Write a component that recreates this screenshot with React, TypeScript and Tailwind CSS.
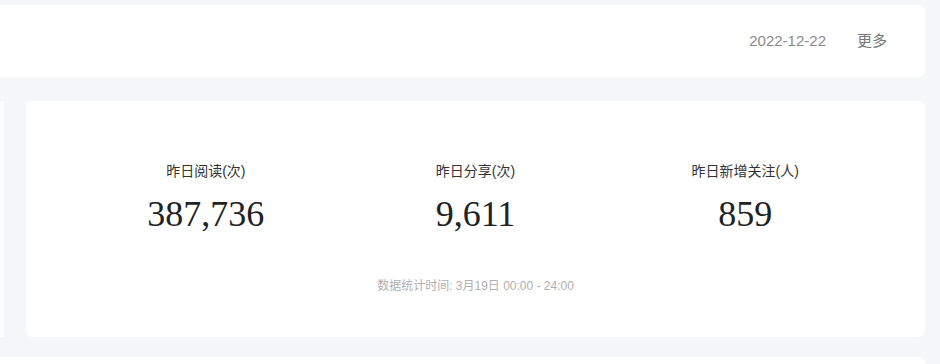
import React from 'react';

const stats = [
  { label: '昨日阅读(次)', value: '387,736' },
  { label: '昨日分享(次)', value: '9,611' },
  { label: '昨日新增关注(人)', value: '859' },
];

export default function App() {
  return (
    <div
      className="w-[940px] h-[364px] overflow-hidden bg-[#f5f6f8] pt-[5px] pr-[15px]"
      style={{ fontFamily: '"Liberation Sans", "Noto Sans CJK SC", sans-serif' }}
    >
      {/* 顶部栏 */}
      <div className="h-[72px] bg-white rounded-r-[6px] flex items-center justify-end pr-[38px]">
        <span className="text-[15px] leading-[20px] text-[#8a8a8a]">2022-12-22</span>
        <span className="ml-[31px] text-[15px] leading-[20px] text-[#777]">更多</span>
      </div>

      {/* 数据概览 */}
      <div className="flex mt-[24px] h-[236px]">
        <div className="w-[4px] bg-[#fcfdfe]" />
        <div className="flex-1 ml-[22px] bg-white rounded-[6px] pt-[60px] px-[45px]">
          <div className="grid grid-cols-3">
            {stats.map(s => (
              <div key={s.label} className="flex flex-col items-center">
                <p className="text-[14px] leading-[20px] text-[#333]">{s.label}</p>
                <p
                  className="mt-[13px] text-[36px] leading-[40px] text-[#222]"
                  style={{ fontFamily: '"Liberation Serif", serif' }}
                >
                  {s.value}
                </p>
              </div>
            ))}
          </div>
          <p className="mt-[44px] text-center text-[12px] leading-[16px] text-[#b0b0b0]">
            数据统计时间: 3月19日 00:00 - 24:00
          </p>
        </div>
      </div>

      <div className="mt-[20px] h-[40px] bg-white rounded-r-[6px]" />
    </div>
  );
}
